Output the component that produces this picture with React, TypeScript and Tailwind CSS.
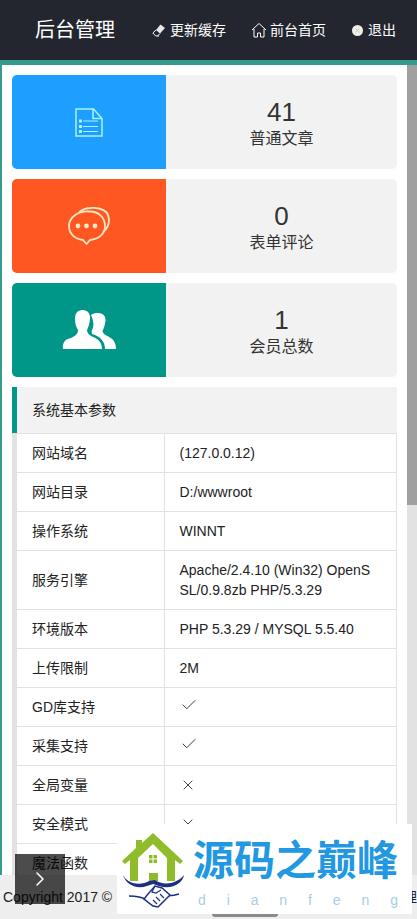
import { Check, ChevronRight, X } from 'lucide-react';

const rows: { name: string; value: string | boolean }[] = [
  { name: '网站域名', value: '(127.0.0.12)' },
  { name: '网站目录', value: 'D:/wwwroot' },
  { name: '操作系统', value: 'WINNT' },
  { name: '服务引擎', value: 'Apache/2.4.10 (Win32) OpenSSL/0.9.8zb PHP/5.3.29' },
  { name: '环境版本', value: 'PHP 5.3.29 / MYSQL 5.5.40' },
  { name: '上传限制', value: '2M' },
  { name: 'GD库支持', value: true },
  { name: '采集支持', value: true },
  { name: '全局变量', value: false },
  { name: '安全模式', value: false },
  { name: '魔法函数', value: false },
];

function DocIcon() {
  return (
    <svg width="28" height="29" viewBox="0 0 28 29" fill="none" stroke="#a8f4ff" strokeWidth="1.500">
      <path d="M1 1h17.500L27 10.500V28H1z" />
      <path d="M18 1v9.500h9" />
      <path d="M8 13h15M8 18.500h15M8 23.500h15" strokeWidth="1" />
      <path d="M4 11.500h3v3H4zM4 17h3v3H4zM4 22h3v3H4z" fill="#a8f4ff" strokeWidth="0" />
    </svg>
  );
}

function ChatIcon() {
  return (
    <svg width="42" height="38" viewBox="0 0 42 38" fill="none" stroke="#ffe6c4" strokeWidth="1.800">
      <path d="M11 5.500C15 1 24 0 31 1.500c7 1.500 10 6 10 11.500 0 5-2 9-6 12" />
      <path d="M21 4.500C10 4 1 10 1 19c0 8 6 13 14 14l3.500 4 3.500-4c9-1 15-6 15-14 0-9-7-14.500-15-14.500z" />
      <circle cx="10" cy="19" r="2.400" fill="#ffe6c4" stroke="none" />
      <circle cx="18.500" cy="19" r="2.400" fill="#ffe6c4" stroke="none" />
      <circle cx="27" cy="19" r="2.400" fill="#ffe6c4" stroke="none" />
    </svg>
  );
}

function UsersIcon() {
  return (
    <svg width="54" height="40" viewBox="0 0 54 40" fill="#ffffff">
      <path d="M20.500 0C26 0 28.500 4 28 9c-.5 5-2 9-3 11 0 3 2 5 6 7 5 2 9 5 9 12H1c-1-6 2-10 8-11 4-2 7-4 7-8-2-3-3-7-3-11 0-5 2-9 7.500-9z" />
      <path d="M36 3c5 0 8 3 7.500 8-.5 4-2 8-3 10 .5 3 3.500 4 6.500 6 4 2 7 5 7 12H43c0-6-3-11-10-14l-3-1c-1-3 0-4 1-6 1-4 0-9-2-13 2-1.500 4-2 7-2z" />
    </svg>
  );
}

function StatCard({ color, icon, num, label }: { color: string; icon: React.ReactNode; num: string; label: string }) {
  return (
    <div className="flex h-[94px] rounded-[5px] overflow-hidden bg-[#f2f2f2] mb-[10px]">
      <div className={`w-[154px] flex items-center justify-center ${color}`}>{icon}</div>
      <div className="flex-1 flex flex-col items-center justify-center pt-[3px] text-[#333]">
        <div className="text-[26px] leading-[30px]">{num}</div>
        <div className="text-[16px] leading-[23px]">{label}</div>
      </div>
    </div>
  );
}

export default function App() {
  return (
    <div
      className="relative w-[417px] h-[919px] overflow-hidden flex flex-col bg-white text-[14px] text-[#333]"
      style={{ fontFamily: '"Liberation Sans", "Noto Sans CJK SC", sans-serif' }}
    >
      {/* Header */}
      <div className="h-[60px] shrink-0 bg-[#23262e] flex items-center text-white">
        <div className="ml-[35px] w-[80px] text-[20px] text-center">后台管理</div>
        <div className="ml-[37px] flex items-center gap-[4px]">
          <svg width="14" height="14" viewBox="0 0 14 14" fill="none" stroke="#fff" strokeWidth="1">
            <path d="M8.500 1.500L13 5l-5 5.500L4 7z" fill="#e8e8e8" stroke="none" />
            <path d="M4 7L.8 10l3 3H7M8 10.500L5.500 13" />
          </svg>
          <span>更新缓存</span>
        </div>
        <div className="ml-[25px] flex items-center gap-[3px]">
          <svg width="16" height="16" viewBox="0 0 16 16" fill="none" stroke="#fff" strokeWidth="1">
            <path d="M1 8l7-6.500L15 8" />
            <path d="M3 7v8h3.500v-4h3v4H13V7" />
          </svg>
          <span>前台首页</span>
        </div>
        <div className="ml-[26px] flex items-center gap-[5px]">
          <div className="w-[11px] h-[11px] rounded-full bg-[#f0efe6] flex items-center justify-center">
            <X size={7} color="#b5b5ad" strokeWidth={2} />
          </div>
          <span>退出</span>
        </div>
      </div>
      <div className="h-[5px] shrink-0 bg-[#349b8d]" />

      {/* Body */}
      <div className="flex-1 flex min-h-0">
        <div className="w-[2px] bg-[#349b8d]" />
        <div className="flex-1 p-[10px] min-w-0">
          <StatCard color="bg-[#1e9fff]" icon={<DocIcon />} num="41" label="普通文章" />
          <StatCard color="bg-[#ff5722]" icon={<ChatIcon />} num="0" label="表单评论" />
          <StatCard color="bg-[#009688]" icon={<UsersIcon />} num="1" label="会员总数" />

          <div className="border-l-[5px] border-[#e2e2e2]">
            <div className="h-[46px] -ml-[5px] flex items-center pl-[15px] bg-[#f2f2f2] border-l-[5px] border-[#009688] text-[#222] rounded-tr-[2px]">
              系统基本参数
            </div>
            <table className="w-full table-fixed border-collapse border-[#e2e2e2] bg-white">
              <colgroup>
                <col className="w-[147px]" />
                <col />
              </colgroup>
              <tbody>
                {rows.map((row) => (
                  <tr key={row.name}>
                    <td className="border border-[#e2e2e2] border-l-0 px-[15px] py-[9px] leading-[20px] text-[#222]">{row.name}</td>
                    <td className="border border-[#e2e2e2] pl-[15px] pr-[20px] py-[9px] leading-[20px] break-all text-[#222]">
                      {row.value === true ? (
                        <Check size={18} strokeWidth={1.100} color="#111" className="-mt-[2px] mb-[2px]" />
                      ) : row.value === false ? (
                        <X size={16} strokeWidth={1.200} color="#111" />
                      ) : (
                        row.value
                      )}
                    </td>
                  </tr>
                ))}
              </tbody>
            </table>
          </div>
        </div>
        {/* Scrollbar */}
        <div className="w-[10px] bg-[#e2e2e2]">
          <div className="h-[440px] bg-[#a0a0a0]" />
        </div>
      </div>

      {/* Footer */}
      <div className="absolute left-0 right-0 bottom-0 h-[44px] bg-[#eeeeee] flex items-center justify-between pl-[3px] whitespace-nowrap text-[#222]">
        <span>Copyright 2017 ©</span>
        <span>理</span>
      </div>

      {/* Side toggle */}
      <div className="absolute left-[15px] top-[854px] w-[50px] h-[50px] bg-black/70 flex items-center justify-center">
        <ChevronRight size={24} color="#fff" strokeWidth={1.500} />
      </div>

      {/* Watermark */}
      <div className="absolute left-[117px] top-[824px] w-[295px] h-[90px] bg-white flex">
        <svg width="75" height="86" viewBox="0 0 75 86" className="mt-[4px] shrink-0">
          <path d="M36 5l30 28-3 3-5-4v21h-8V30L36 16 21 30v23h-8V32l-5 4-3-3 14-13v-8h6v3z" fill="#8fbc2a" />
          <path d="M32 27h3.500v3.500H32zM36.500 27H40v3.500h-3.500zM32 31.500h3.500V35H32zM36.500 31.500H40V35h-3.500z" fill="#8fbc2a" />
          <path d="M32 45h9v8h-9z" fill="#8fbc2a" />
          <path d="M6 47c4 9 18 11 26 6l6-1c8 6 22 4 29-5-1 8-12 15-25 11l-6-2-6 2c-12 4-22-3-24-11z" fill="#1e2f86" />
          <path d="M12 68c7 0 13 1 18 4M62 66c-6 2-12 2-17 1" fill="none" stroke="#1e2f86" strokeWidth="1.500" />
          <path d="M31 66l7-8 7 2 8 7-12 12-5-1-9-7z" fill="#ffffff" stroke="#1e2f86" strokeWidth="1.500" />
          <path d="M38 58l-3 6 4 1 5-3M36 72l4 4M39 69l4 4M43 66l4 4" fill="none" stroke="#1e2f86" strokeWidth="1.200" />
        </svg>
        <div className="flex-1 min-w-0 pr-[12px] ml-[1px]">
          <div className="h-[56px] mt-[9px] text-[41px] leading-[56px] font-bold text-[#2298e2] whitespace-nowrap">
            源码之巅峰
          </div>
          <div className="flex justify-between pl-[5px] pr-[2px] mt-[2px] text-[14px] leading-[18px] text-[#a9cde8]">
            <span>d</span>
            <span>i</span>
            <span>a</span>
            <span>n</span>
            <span>f</span>
            <span>e</span>
            <span>n</span>
            <span>g</span>
          </div>
        </div>
      </div>
      <div className="absolute left-[212px] top-[914px] w-[66px] h-[3px] rounded-b-full bg-[#8a8a8a]" />
    </div>
  );
}
